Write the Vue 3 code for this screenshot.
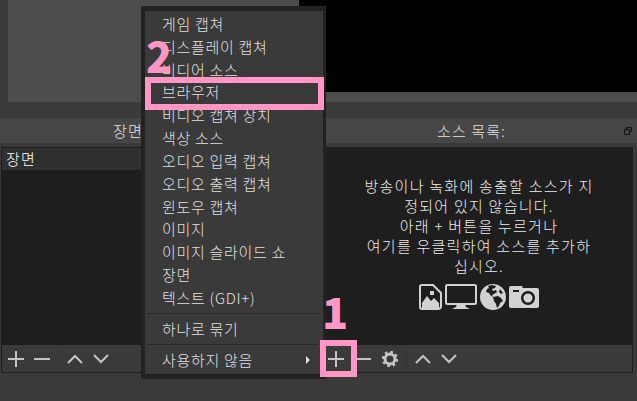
<script setup>
const menuTop = ['게임 캡쳐', '디스플레이 캡쳐', '비디어 소스', '브라우저', '비디오 캡쳐 장치', '색상 소스', '오디오 입력 캡쳐', '오디오 출력 캡쳐', '윈도우 캡쳐', '이미지', '이미지 슬라이드 쇼', '장면', '텍스트 (GDI+)']
</script>

<template>
  <div class="app">
    <div class="preview">
      <div class="canvas"></div>
    </div>

    <div class="docks">
      <section class="dock scenes">
        <header class="dock-title">장면</header>
        <div class="list">
          <div class="row">장면</div>
        </div>
        <div class="toolbar">
          <svg class="ico" width="16" height="16" viewBox="0 0 16 16"><path d="M8 0v16M0 8h16" /></svg>
          <svg class="ico minus" width="16" height="16" viewBox="0 0 16 16"><path d="M0 8h16" /></svg>
          <i class="sep"></i>
          <svg class="ico" width="16" height="10" viewBox="0 0 16 10"><path d="M1 9l7-7 7 7" /></svg>
          <svg class="ico down" width="16" height="10" viewBox="0 0 16 10"><path d="M1 1l7 7 7-7" /></svg>
        </div>
      </section>

      <section class="dock sources">
        <header class="dock-title">
          소스 목록:
          <svg class="float" width="8" height="8" viewBox="0 0 8 8"><path d="M2.5 2.5V.5h5v4h-2M.5 2.5h5v5h-5z" /></svg>
        </header>
        <div class="list empty">
          <p class="hint">방송이나 녹화에 송출할 소스가 지<br />정되어 있지 않습니다.<br />아래 + 버튼을 누르거나<br />여기를 우클릭하여 소스를 추가하<br />십시오.</p>
          <div class="types">
            <svg width="23" height="26" viewBox="0 0 23 26">
              <path class="line" d="M3 1h11l8 8v13a3 3 0 0 1-3 3H3a2 2 0 0 1-2-2V3a2 2 0 0 1 2-2z" />
              <path class="fill" d="M3 24v-5l5-7 4 5 3-3 5 5v5z" />
              <rect class="fill" x="11" y="7" width="4" height="4" />
            </svg>
            <svg width="32" height="26" viewBox="0 0 32 26">
              <rect class="line" x="1" y="1" width="30" height="19" rx="1.5" />
              <path class="fill" d="M12 20h8l1 3 4 2H7l4-2z" />
            </svg>
            <svg width="26" height="26" viewBox="0 0 26 26">
              <circle class="fill" cx="13" cy="13" r="13" />
              <path class="land" d="M8 2l4-1 4 1-1 2-3 1 1 2 3-1 1 2-3 2-2 1 1 2-2-1-2-3-3-1 1-3 2-1z" />
              <path class="land" d="M13 13l5-1 3 2 2 3-3 2-1 3-2 2-1-4-2-3z" />
              <path class="land" d="M20 5l3 4-2 1-2-2z" />
            </svg>
            <svg width="30" height="22" viewBox="0 0 30 22">
              <path class="fill" fill-rule="evenodd" d="M2 0h10a1 1 0 0 1 1 2h15a2 2 0 0 1 2 2v16a2 2 0 0 1-2 2H2a2 2 0 0 1-2-2V2a2 2 0 0 1 2-2zM4 4v2h6V4zM19 5a7 7 0 1 0 .01 0zM19 7.5a4.5 4.5 0 1 1-.01 0z" />
            </svg>
          </div>
        </div>
        <div class="toolbar">
          <svg class="ico" width="16" height="16" viewBox="0 0 16 16"><path d="M8 0v16M0 8h16" /></svg>
          <svg class="ico minus-r" width="16" height="16" viewBox="0 0 16 16"><path d="M0 8h16" /></svg>
          <svg class="gear" width="16" height="16" viewBox="0 0 16 16">
            <circle cx="8" cy="8" r="5" />
            <circle class="teeth" cx="8" cy="8" r="7" />
          </svg>
          <i class="sep"></i>
          <svg class="ico" width="16" height="10" viewBox="0 0 16 10"><path d="M1 9l7-7 7 7" /></svg>
          <svg class="ico down" width="16" height="10" viewBox="0 0 16 10"><path d="M1 1l7 7 7-7" /></svg>
        </div>
      </section>
    </div>

    <div class="menu">
      <div class="menu-inner">
        <div v-for="item in menuTop" :key="item" class="item">{{ item }}</div>
        <hr />
        <div class="item">하나로 묶기</div>
        <hr />
        <div class="item sub">사용하지 않음<b class="arrow"></b></div>
      </div>
    </div>

    <div class="mark box-two"></div>
    <div class="mark box-one"></div>
    <span class="num num-two">2</span>
    <span class="num num-one">1</span>
  </div>
</template>

<style>
body {
  margin: 0;
  background: #3a3a3a;
}
</style>

<style scoped>
.app {
  position: relative;
  width: 637px;
  height: 401px;
  overflow: hidden;
  background: #3a3a3a;
  color: #e4e4e4;
  font-family: "Noto Sans CJK KR", "Noto Sans", sans-serif;
  font-size: 15px;
  font-weight: 300;
  letter-spacing: 1.1px;
}

.preview {
  margin-left: 8px;
  height: 102px;
  background: #4c4c4c;
}

.canvas {
  margin-left: 291px;
  height: 92px;
  background: #000;
}

.docks {
  display: flex;
  margin-top: 16px;
  gap: 52px;
}

.dock {
  display: flex;
  flex-direction: column;
}

.scenes {
  width: 272px;
}

.sources {
  flex: 1;
}

.dock-title {
  position: relative;
  height: 25px;
  background: #464646;
  display: flex;
  align-items: center;
  justify-content: center;
  line-height: 25px;
}

.scenes .dock-title {
  padding-right: 16px;
}

.sources .dock-title {
  padding-right: 18px;
}

.float {
  position: absolute;
  right: 5px;
  top: 9px;
  fill: none;
  stroke: #111;
}

.list {
  margin-top: 4px;
  height: 198px;
  box-sizing: border-box;
  background: #1e1e1e;
  border-top: 1px solid #1e1e1e;
  border-left: 1px solid #1e1e1e;
}

.scenes .list {
  margin-left: 1px;
}

.sources .list {
  margin-right: 4px;
}

.row {
  height: 22px;
  line-height: 22px;
  padding-left: 4px;
  background: #303030;
  color: #fff;
}

.empty {
  display: flex;
  flex-direction: column;
  align-items: center;
  padding: 28px 0 0 0;
}

.hint {
  margin: 0;
  width: 250px;
  text-align: center;
  line-height: 20px;
  white-space: nowrap;
  letter-spacing: 1.25px;
  color: #ececec;
}

.types {
  display: flex;
  align-items: center;
  gap: 3px;
  margin-top: 8px;
  margin-right: 1px;
}

.types svg {
  display: block;
}

.line {
  fill: none;
  stroke: #d2d2d2;
  stroke-width: 2;
}

.fill {
  fill: #d2d2d2;
}

.land {
  fill: #1e1e1e;
}

.toolbar {
  display: flex;
  align-items: center;
  height: 28px;
  box-sizing: border-box;
  border-bottom: 1px solid #1e1e1e;
  border-left: 1px solid #1e1e1e;
  padding-left: 6px;
  background: #3a3a3a;
}

.scenes .toolbar {
  margin-left: 1px;
}

.sources .toolbar {
  margin-right: 4px;
  padding-left: 4px;
  border-left: 0;
  border-right: 1px solid #1e1e1e;
}

.ico {
  display: block;
  fill: none;
  stroke: #c4c4c4;
  stroke-width: 2;
  flex: none;
}

.minus {
  margin-left: 10px;
}

.minus-r {
  margin-left: 11px;
}

.down {
  margin-left: 10px;
}

.sep {
  width: 1px;
  height: 18px;
  margin: 0 8px;
  background: #333;
}

.gear {
  display: block;
  flex: none;
  margin-left: 11px;
  fill: none;
  stroke: #c4c4c4;
  stroke-width: 3;
}

.teeth {
  stroke-width: 2.4;
  stroke-dasharray: 2.7 2.8;
}

.menu {
  position: absolute;
  left: 141px;
  top: 6px;
  width: 185px;
  height: 373px;
  box-sizing: border-box;
  padding: 5px 3px 5px 4px;
  background: #222;
}

.menu-inner {
  height: 100%;
  box-sizing: border-box;
  padding: 2px 2px 0;
  background: #3a3a3a;
}

.item {
  height: 22.83px;
  line-height: 22.83px;
  padding-left: 15px;
  white-space: nowrap;
  position: relative;
  color: #e0e0e0;
  letter-spacing: 0.7px;
}

hr {
  height: 1px;
  margin: 3px 3px 4px 0;
  border: 0;
  background: #2a2a2a;
}

.arrow {
  position: absolute;
  left: 159px;
  top: 7.5px;
  width: 0;
  height: 0;
  border-left: 4px solid #dcdcdc;
  border-top: 4px solid transparent;
  border-bottom: 4px solid transparent;
}

.mark {
  position: absolute;
  box-sizing: border-box;
  border: 6px solid #ff96c4;
}

.box-two {
  left: 145px;
  top: 77px;
  width: 179px;
  height: 33px;
}

.box-one {
  left: 320px;
  top: 340px;
  width: 37px;
  height: 37px;
}

.num {
  position: absolute;
  color: #ff96c4;
  font-family: "Noto Sans CJK KR", sans-serif;
  font-weight: 900;
  font-size: 43px;
  line-height: 43px;
  letter-spacing: 0;
}

.num-two {
  left: 146px;
  top: 33px;
}

.num-one {
  left: 322px;
  top: 289px;
}
</style>
